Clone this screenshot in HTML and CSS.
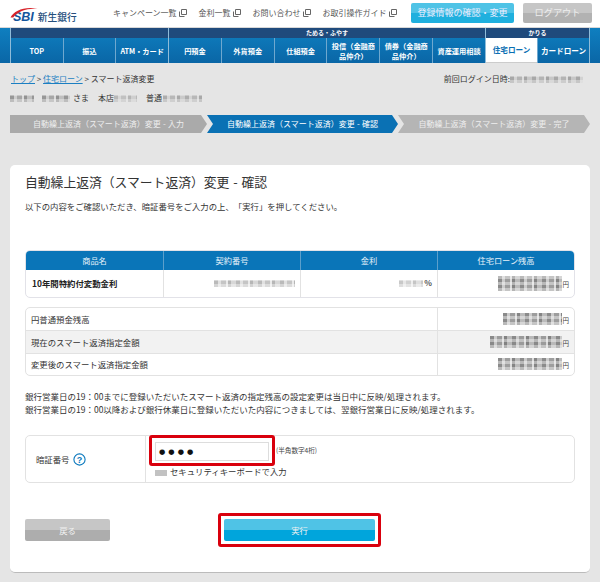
FILE: index.html
```html
<!DOCTYPE html>
<html lang="ja">
<head>
<meta charset="utf-8">
<title>自動繰上返済（スマート返済）変更 - 確認</title>
<link rel="stylesheet" href="styles.css">
</head>
<body>
<header class="top">
  <div class="logo">
    <svg class="logo-arc" width="28" height="11" viewBox="0 0 28 11"><path d="M.5 10.5C4 3.500 15-1 27.500 1.800C17 1 8 4 3.200 10.500Z" fill="#d8232a"/></svg>
    <span class="logo-sbi">SBI</span><span class="logo-name">新生銀行</span>
  </div>
  <nav class="util">
    <a class="util-link">キャンペーン一覧<svg class="ext" width="8" height="8" viewBox="0 0 8 8"><path d="M2.500.5h5v5h-5zM.5 2.500v5h5" fill="none" stroke="#666"/></svg></a>
    <a class="util-link">金利一覧<svg class="ext" width="8" height="8" viewBox="0 0 8 8"><path d="M2.500.5h5v5h-5zM.5 2.500v5h5" fill="none" stroke="#666"/></svg></a>
    <a class="util-link">お問い合わせ<svg class="ext" width="8" height="8" viewBox="0 0 8 8"><path d="M2.500.5h5v5h-5zM.5 2.500v5h5" fill="none" stroke="#666"/></svg></a>
    <a class="util-link">お取引操作ガイド<svg class="ext" width="8" height="8" viewBox="0 0 8 8"><path d="M2.500.5h5v5h-5zM.5 2.500v5h5" fill="none" stroke="#666"/></svg></a>
  </nav>
  <a class="head-btn head-btn-blue">登録情報の確認・変更</a>
  <a class="head-btn head-btn-gray">ログアウト</a>
</header>

<nav class="mainnav">
  <div class="group group-3">
    <div class="band"></div>
    <div class="items"><a class="item">TOP</a><a class="item">振込</a><a class="item">ATM・カード</a></div>
  </div>
  <div class="group group-6">
    <div class="band">ためる・ふやす</div>
    <div class="items"><a class="item">円預金</a><a class="item">外貨預金</a><a class="item">仕組預金</a><a class="item">投信（金融商<br>品仲介）</a><a class="item">債券（金融商<br>品仲介）</a><a class="item">資産運用相談</a></div>
  </div>
  <div class="group group-2">
    <div class="band">かりる</div>
    <div class="items"><a class="item item-on">住宅ローン</a><a class="item">カードローン</a></div>
  </div>
</nav>

<div class="crumbs">
  <div><a class="lnk">トップ</a> &gt; <a class="lnk">住宅ローン</a> &gt; スマート返済変更</div>
  <div class="last">前回ログイン日時:<span class="blur blur-date"></span></div>
</div>
<div class="who"><span class="blur blur-a"></span><span class="blur blur-a2"></span><span class="who-sama">さま</span><span class="who-gap">本店<span class="blur blur-b"></span></span><span class="who-gap">普通<span class="blur blur-c"></span></span></div>

<ol class="steps">
  <li class="step step-first">自動繰上返済（スマート返済）変更 - 入力</li>
  <li class="step step-on">自動繰上返済（スマート返済）変更 - 確認</li>
  <li class="step step-last">自動繰上返済（スマート返済）変更 - 完了</li>
</ol>

<main class="card">
  <h1 class="title">自動繰上返済（スマート返済）変更 - 確認</h1>
  <p class="lead">以下の内容をご確認いただき、暗証番号をご入力の上、「実行」を押してください。</p>

  <div class="tbl tbl-product">
    <div class="th">商品名</div><div class="th">契約番号</div><div class="th">金利</div><div class="th">住宅ローン残高</div>
    <div class="td td-name">10年間特約付変動金利</div>
    <div class="td td-r"><span class="blur blur-contract"></span></div>
    <div class="td td-r"><span class="blur blur-rate"></span><b class="pct">%</b></div>
    <div class="td td-r"><span class="blur blur-money"></span><span class="yen">円</span></div>
  </div>

  <div class="tbl tbl-amounts">
    <div class="amt-l">円普通預金残高</div><div class="amt-r"><span class="blur blur-m1"></span><span class="yen">円</span></div>
    <div class="amt-l amt-alt">現在のスマート返済指定金額</div><div class="amt-r amt-alt"><span class="blur blur-m2"></span><span class="yen">円</span></div>
    <div class="amt-l">変更後のスマート返済指定金額</div><div class="amt-r"><span class="blur blur-m3"></span><span class="yen">円</span></div>
  </div>

  <p class="note">銀行営業日の19：00までに登録いただいたスマート返済の指定残高の設定変更は当日中に反映/処理されます。<br>銀行営業日の19：00以降および銀行休業日に登録いただいた内容につきましては、翌銀行営業日に反映/処理されます。</p>

  <div class="tbl tbl-pin">
    <div class="pin-label">暗証番号<svg class="help" width="13" height="13" viewBox="0 0 13 13"><circle cx="6.500" cy="6.500" r="5.600" fill="none" stroke="#0a78bd" stroke-width="1.100"/><text x="6.500" y="9.600" text-anchor="middle" class="help-q">?</text></svg></div>
    <div class="pin-cell">
      <div class="pin-row">
        <div class="hl hl-input"><div class="pin-input">●●●●</div></div>
        <span class="pin-hint">(半角数字4桁)</span>
      </div>
      <div class="kbd"><span class="kbd-box"></span>セキュリティキーボードで入力</div>
    </div>
  </div>

  <div class="actions">
    <a class="btn btn-back">戻る</a>
    <div class="hl hl-btn"><a class="btn btn-run">実行</a></div>
  </div>
</main>
</body>
</html>
```
FILE: styles.css
```css
* { box-sizing: border-box; }
html, body { margin: 0; padding: 0; }
body {
  width: 600px;
  height: 582px;
  overflow: hidden;
  background: #e5e5e5;
  color: #333;
  font-family: "Noto Sans CJK JP", "Liberation Sans", sans-serif;
  font-size: 8.4px;
  line-height: 1.3;
  text-spacing-trim: space-all;
}

/* header */
.top {
  height: 28px;
  background: #fff;
  display: flex;
  align-items: center;
  padding: 0 8px 1px 10px;
  border-bottom: 1px solid #d8d8d8;
}
.logo { position: relative; width: 103px; height: 27px; display: flex; align-items: center; padding-top: 8px; }
.logo-arc { position: absolute; left: 0; top: 7px; }
.logo-sbi { font: italic bold 12.500px/12px "Liberation Sans", sans-serif; color: #14559c; margin: 0 4px 0 3px; }
.logo-name { font-size: 9.700px; font-weight: 500; line-height: 12px; color: #264f7d; }
.util { display: flex; gap: 12px; width: 298px; }
.util-link { color: #555; font-size: 8px; white-space: nowrap; display: flex; align-items: center; }
.ext { margin-left: 2px; }
.head-btn {
  height: 20px;
  border-radius: 2px;
  color: #eef;
  display: flex;
  align-items: center;
  justify-content: center;
}
.head-btn-blue { width: 103px; font-size: 9px; background: linear-gradient(#4fc3e6 50%, #1fb0de 50%); }
.head-btn-gray { width: 69px; margin-left: 9px; font-size: 9.200px; color: #eee; background: linear-gradient(#c6c6c6 50%, #b2b2b2 50%); }

/* main nav */
.mainnav {
  height: 35px;
  padding: 0 10px;
  display: flex;
  background: linear-gradient(#0f7fc0, #0a66a6);
}
.group { display: flex; flex-direction: column; border-left: 1px solid #8fbcd9; }
.group-3 { width: 158px; }
.group-6 { width: 317px; }
.group-2 { width: 105px; border-right: 1px solid #8fbcd9; }
.band {
  height: 10px;
  background: #1f4a7c;
  color: #fff;
  font-size: 6px;
  font-weight: 700;
  line-height: 10px;
  text-align: center;
}
.group-6 .band { text-align: left; padding-left: 137px; }
.items { flex: 1; display: flex; }
.item {
  flex: 1 1 0;
  display: flex;
  align-items: center;
  justify-content: center;
  text-align: center;
  font-size: 7.200px;
  font-weight: 700;
  line-height: 10px;
  color: #fff;
  border-left: 1px solid #6fa8cf;
  white-space: nowrap;
}
.item:first-child { border-left: 0; }
.item-on { background: #fff; color: #0a6fb3; font-size: 7.600px; border-bottom: 1px solid #ccc; }
.group-2 .item { font-size: 7.600px; }

/* crumbs */
.crumbs {
  display: flex;
  justify-content: space-between;
  padding: 9px 17px 0 11px;
  height: 27px;
  font-size: 8px;
  line-height: 14px;
  color: #333;
}
.lnk { color: #1b7fc2; text-decoration: underline; }
.last { display: flex; align-items: center; height: 14px; }
.who {
  display: flex;
  align-items: center;
  gap: 8px;
  height: 11px;
  margin-top: 3px;
  padding-left: 10px;
  font-size: 8px;
}
.who-sama { margin-left: -5px; }
.who-gap { display: flex; align-items: center; margin-left: 1px; }

/* placeholder for masked values */
.blur {
  display: inline-block;
  height: 7px;
  background:
    repeating-linear-gradient(0deg, rgba(255,255,255,.4) 0 3px, rgba(255,255,255,0) 3px 6px),
    repeating-linear-gradient(90deg, #777 0 4px, #c4c4c4 4px 7px, #8d8d8d 7px 12px, #d6d6d6 12px 14px, #6f6f6f 14px 17px, #b0b0b0 17px 22px);
}
.blur-date { width: 73px; opacity: .55; }
.blur-a { width: 24px; opacity: .7; }
.blur-a2 { width: 28px; opacity: .7; }
.blur-b { width: 23px; opacity: .4; }
.blur-c { width: 39px; margin-left: 1px; opacity: .5; }
.blur-contract { width: 81px; height: 7px; opacity: .5; }
.blur-rate { width: 24px; opacity: .4; }
.blur-money { width: 64px; height: 15px; opacity: .85; }
.blur-m1 { width: 59px; height: 12px; opacity: .85; }
.blur-m2 { width: 72px; height: 12px; opacity: .85; }
.blur-m3 { width: 64px; height: 12px; opacity: .85; }

/* steps */
.steps {
  list-style: none;
  margin: 11px 0 0;
  padding: 0 10px;
  height: 18px;
  display: flex;
}
.step {
  color: #eee;
  font-size: 8px;
  word-spacing: .5px;
  display: flex;
  align-items: center;
  justify-content: center;
  white-space: nowrap;
}
.step-first {
  width: 197px;
  background: #aaa;
  clip-path: polygon(0 0, 191px 0, 100% 50%, 191px 100%, 0 100%);
}
.step-on {
  width: 191px;
  background: #0a71b4;
  color: #fff;
  clip-path: polygon(0 0, 185px 0, 100% 50%, 185px 100%, 0 100%, 6px 50%);
}
.step-last {
  width: 192px;
  background: #b5b5b5;
  clip-path: polygon(0 0, 186px 0, 100% 50%, 186px 100%, 0 100%, 6px 50%);
}

/* card */
.card {
  margin: 32px 10px 0;
  height: 408px;
  padding: 8px 15px 0;
  background: #fff;
  border-radius: 5px;
  border-bottom: 1px solid #bbb;
  color: #333;
}
.title { margin: 0; font-size: 12.800px; word-spacing: 1px; line-height: 17px; font-weight: 400; }
.lead { margin: 10px 0 0; line-height: 12px; }

.tbl {
  border: 1px solid #e2e2e2;
  border-radius: 5px;
  overflow: hidden;
}
.tbl-product {
  margin-top: 38px;
  display: grid;
  grid-template-columns: 137px 137px 137px 1fr;
  grid-template-rows: 19px 27px;
  border-color: #e2e2e8;
}
.th {
  background: #0a75b8;
  color: #e6f2fa;
  display: flex;
  align-items: center;
  justify-content: center;
  border-left: 1px solid #5c9fcb;
  font-size: 8.200px;
}
.th:first-child { border-left: 0; }
.td {
  display: flex;
  align-items: center;
  border-left: 1px solid #e2e2e2;
}
.td-name { border-left: 0; padding-left: 6px; font-weight: 700; font-size: 8.400px; color: #222; }
.td-r { justify-content: flex-end; padding-right: 5px; }
.pct { margin-left: 1px; font-weight: 700; font-size: 8px; color: #555; }
.yen { font-size: 6.500px; margin-left: 1px; align-self: center; padding-top: 2px; color: #444; }

.tbl-amounts {
  margin-top: 9px;
  display: grid;
  grid-template-columns: 411px 1fr;
  grid-template-rows: repeat(3, 1fr);
  height: 69px;
}
.amt-l { padding-left: 5px; display: flex; align-items: center; border-top: 1px solid #e2e2e2; }
.amt-r {
  display: flex;
  align-items: center;
  justify-content: flex-end;
  padding-right: 5px;
  border-left: 1px solid #e2e2e2;
  border-top: 1px solid #e2e2e2;
}
.amt-l:first-child, .amt-l:first-child + .amt-r { border-top: 0; }
.amt-alt { background: #f2f2f2; }

.note { margin: 14px 0 0; line-height: 13px; font-size: 8.500px; }

/* PIN */
.tbl-pin {
  margin-top: 19px;
  height: 48px;
  display: flex;
  overflow: visible;
}
.pin-label {
  width: 120px;
  padding-left: 10px;
  display: flex;
  align-items: center;
  gap: 3px;
  border-right: 1px solid #e2e2e2;
}
.help-q { font: 700 9px "Liberation Sans", sans-serif; fill: #0a78bd; }
.pin-cell { padding: 0 0 0 3px; margin-top: -1px; }
.pin-row { display: flex; align-items: center; gap: 1px; }
.hl { border: 3px solid #d9000d; border-radius: 3px; background: #fff; }
.hl-input { width: 126px; height: 31px; padding: 4px 3px; }
.pin-input {
  height: 19px;
  border: 1px solid #ddd;
  padding-left: 3px;
  color: #111;
  font: 7.200px/17px "DejaVu Sans", sans-serif;
  letter-spacing: 3.100px;
}
.pin-hint { font-size: 6.600px; color: #444; }
.kbd { display: flex; align-items: center; margin: -1px 0 0 6px; font-size: 8.400px; line-height: 12px; }
.kbd-box { width: 12px; height: 6px; margin: 4px 3px 0 0; background: #c2c2c2; }

/* actions */
.actions {
  display: flex;
  align-items: center;
  margin-top: 30px;
  height: 34px;
}
.btn {
  display: flex;
  align-items: center;
  justify-content: center;
  height: 22px;
  border-radius: 2px;
  color: #f2f2f2;
  font-size: 8.400px;
}
.btn-back { width: 85px; background: linear-gradient(#c6c6c6 50%, #adadad 50%); }
.hl-btn { width: 163px; height: 34px; margin-left: 108px; padding: 3px; }
.btn-run { width: 100%; background: linear-gradient(#4fc3e6 50%, #00a5dc 50%); }
```
